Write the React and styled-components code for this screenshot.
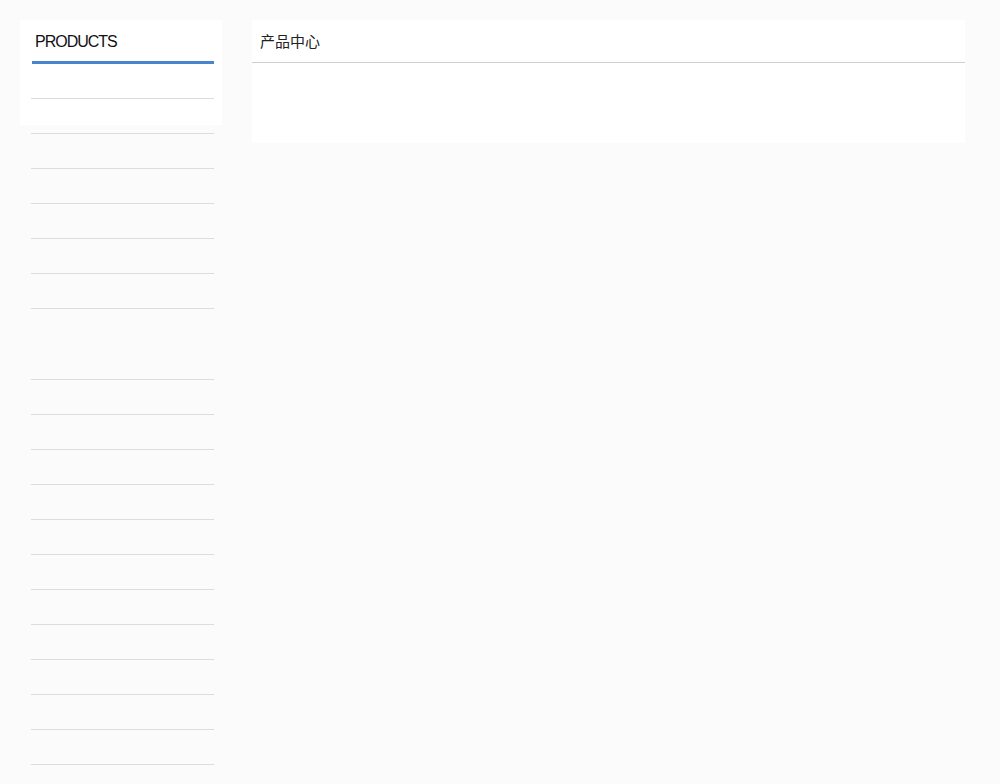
import React from 'react';
import styled, { createGlobalStyle } from 'styled-components';

const GlobalStyle = createGlobalStyle`
  html, body {
    margin: 0;
    padding: 0;
    background-color: #fbfbfb;
    font-family: "Liberation Sans", Arial, "Noto Sans CJK SC", sans-serif;
  }
`;

const menuItems = Array.from({ length: 19 }, (_, i) => ({ id: i, tall: i === 7 }));

const App = () => {
  return (
    <>
      <GlobalStyle />
      <Page>
        <Sidebar>
          <SideTitle>PRODUCTS</SideTitle>
          <MenuList>
            {menuItems.map(item => (
              <MenuItem key={item.id} $tall={item.tall} />
            ))}
          </MenuList>
        </Sidebar>
        <Content>
          <ContentHeader>产品中心</ContentHeader>
        </Content>
      </Page>
    </>
  );
};

const Page = styled.div`
  display: flex;
  align-items: flex-start;
  gap: 30px;
  padding: 20px 35px 20px 20px;
`;

// white card only covers the top of the column, the list runs past it
const Sidebar = styled.div`
  width: 202px;
  flex-shrink: 0;
  background: linear-gradient(#fff, #fff) no-repeat;
  background-size: 100% 105px;
  padding: 0 8px 0 12px;
  box-sizing: border-box;
`;

const SideTitle = styled.div`
  height: 44px;
  padding: 13px 0 0 3px;
  box-sizing: border-box;
  font-size: 16px;
  line-height: 18px;
  letter-spacing: -1px;
  color: #111;
  border-bottom: 3px solid #4a84cf;
`;

const MenuList = styled.ul`
  list-style: none;
  margin: 0 0 0 -1px;
  padding: 0;
`;

const MenuItem = styled.li`
  height: ${p => (p.$tall ? '70px' : '34px')};
  border-bottom: 1px solid #dcdcdc;
`;

const Content = styled.div`
  flex: 1;
  height: 123px;
  background-color: #fff;
`;

const ContentHeader = styled.div`
  height: 43px;
  padding: 12px 0 0 8px;
  box-sizing: border-box;
  font-family: "Noto Sans CJK SC", "Liberation Sans", sans-serif;
  font-size: 15px;
  line-height: 18px;
  color: #222;
  border-bottom: 1px solid #cfcfcf;
`;

export default App;
